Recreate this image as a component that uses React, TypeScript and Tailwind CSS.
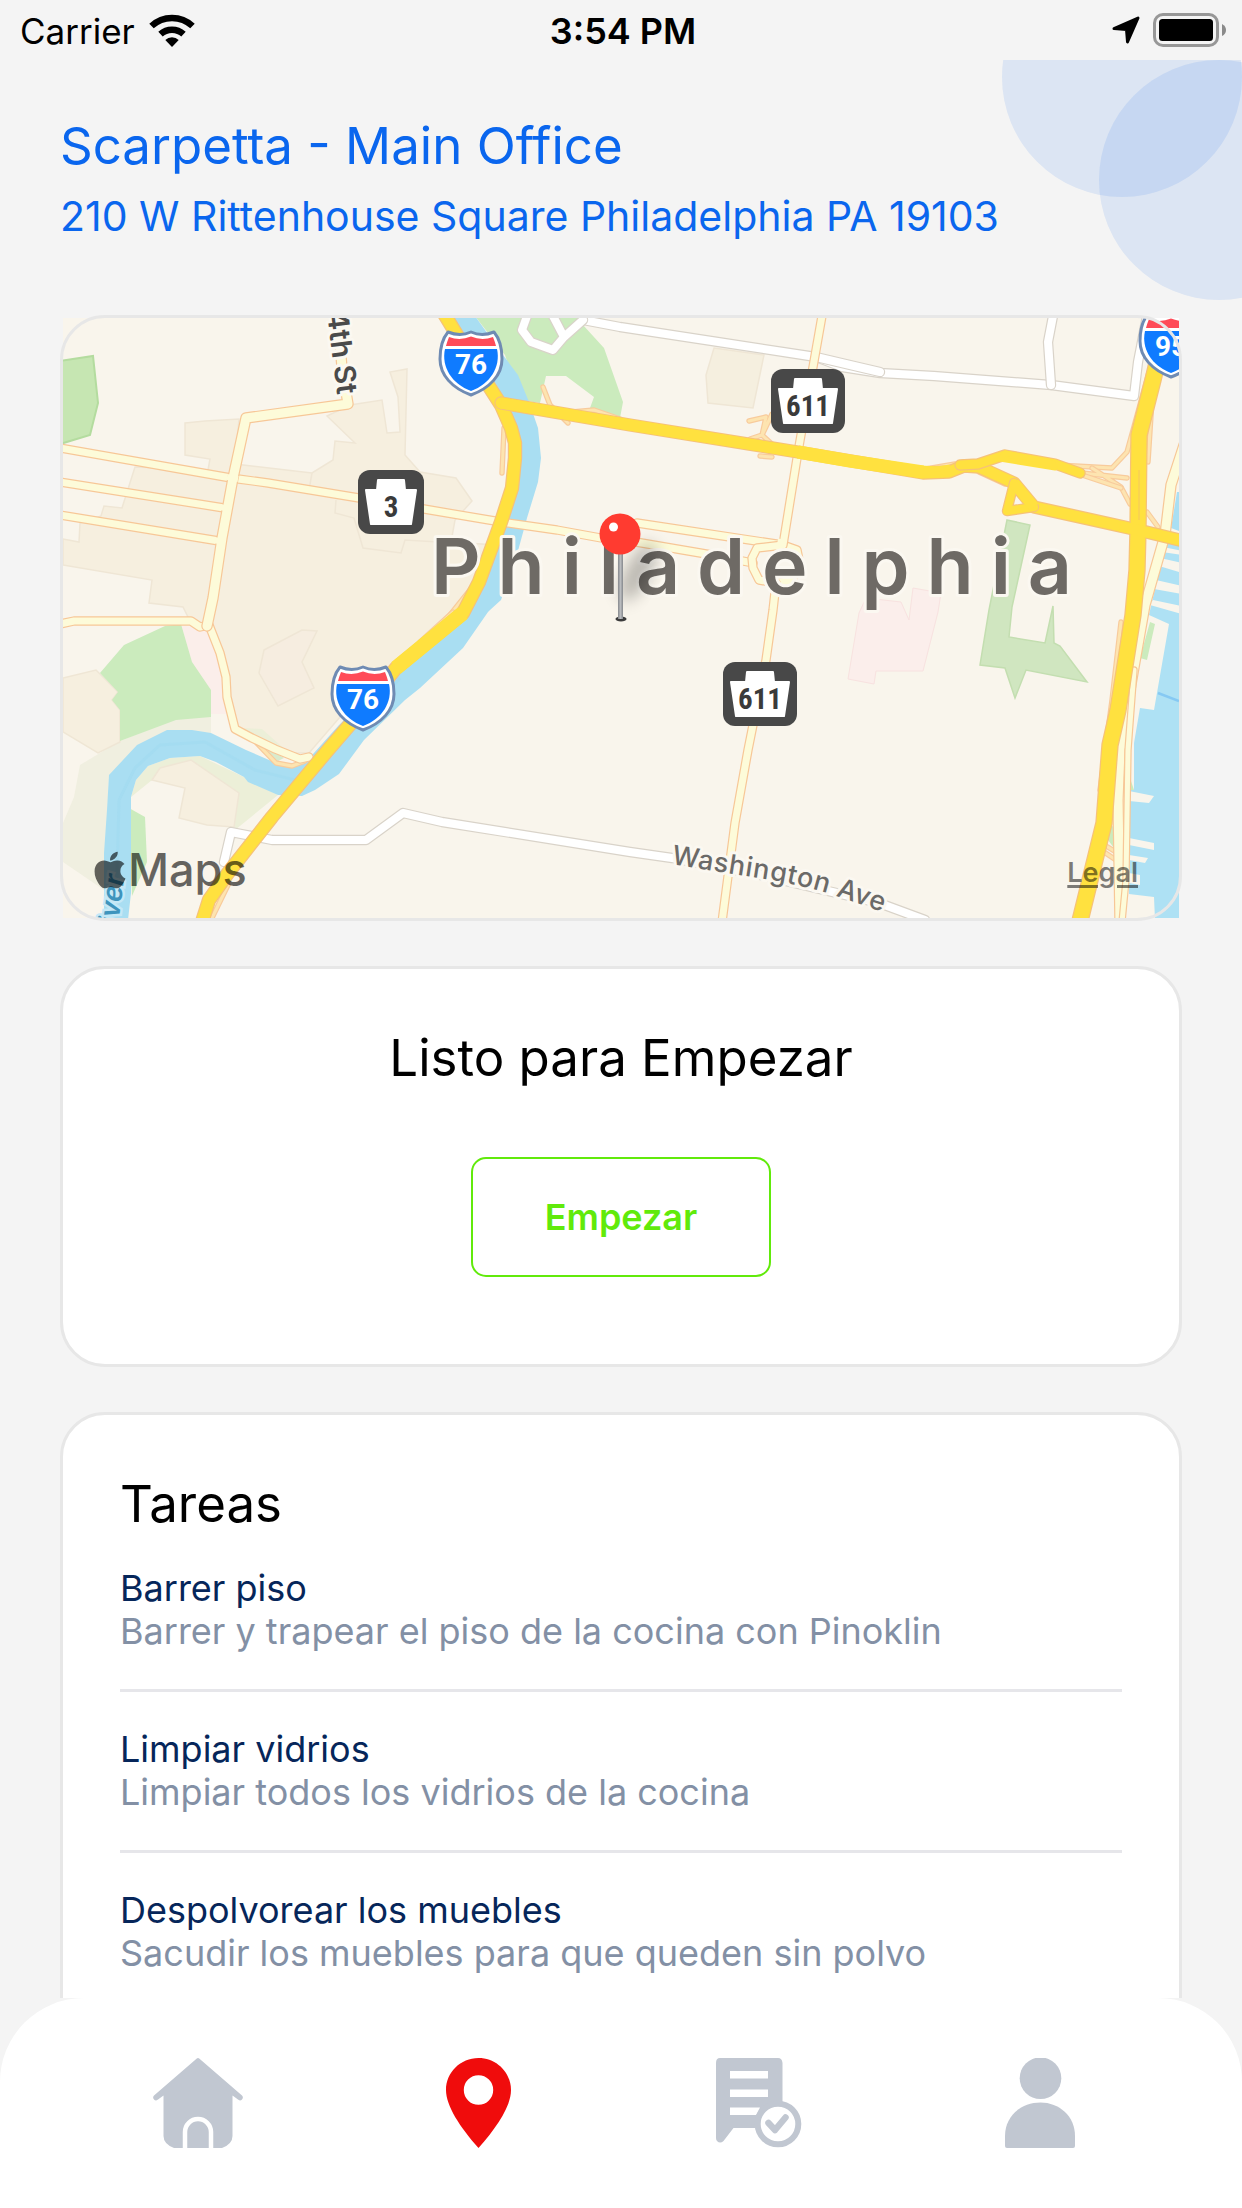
import { FaApple } from "react-icons/fa";

const tasks = [
  { title: "Barrer piso", detail: "Barrer y trapear el piso de la cocina con Pinoklin" },
  { title: "Limpiar vidrios", detail: "Limpiar todos los vidrios de la cocina" },
  { title: "Despolvorear los muebles", detail: "Sacudir los muebles para que queden sin polvo" },
];

function StatusBar() {
  return (
    <div className="relative z-10 grid h-[60px] shrink-0 grid-cols-3 items-center pl-[20px] pr-[16px] text-black">
      <div className="flex items-center gap-[14px]">
        <span className="pt-[2px] text-[35px] leading-[42px]">Carrier</span>
        <svg className="h-[33px] w-[46px]" viewBox="0 0 46 33" aria-label="Wi-Fi">
          <path d="M23 33 L16.3 26 A9.8 9.8 0 0 1 29.700 26 Z" />
          <path d="M11.500 20.200 A17 17 0 0 1 34.500 20.200" fill="none" stroke="#000" strokeWidth="6.500" />
          <path d="M2.500 12 A30 30 0 0 1 43.500 12" fill="none" stroke="#000" strokeWidth="6.500" />
        </svg>
      </div>
      <span className="pt-[2px] text-center text-[36px] font-semibold leading-[42px]">3:54 PM</span>
      <div className="flex items-center justify-end gap-[13px]">
        <svg className="h-[28px] w-[28px]" viewBox="0 0 28 28" aria-label="Ubicación">
          <path
            d="M26 2 L15.500 26 L14.500 13.500 L2 12.500 Z"
            fill="#000"
            stroke="#000"
            strokeWidth="3"
            strokeLinejoin="round"
          />
        </svg>
        <svg className="h-[34px] w-[73px]" viewBox="0 0 73 34" aria-label="Batería">
          <rect x="1.500" y="1.500" width="63" height="31" rx="8.500" fill="none" stroke="#979797" strokeWidth="3" />
          <rect x="6" y="6" width="54" height="22" rx="3.500" />
          <path d="M69 11 Q73 13 73 17 Q73 21 69 23 Z" fill="#8a8a8a" />
        </svg>
      </div>
    </div>
  );
}

function Road({ d, w, fill, edge }: { d: string; w: number; fill: string; edge: string }) {
  return (
    <g fill="none" strokeLinejoin="round" strokeLinecap="round">
      <path d={d} stroke={edge} strokeWidth={w + 2.4} />
      <path d={d} stroke={fill} strokeWidth={w} />
    </g>
  );
}

function Interstate({ x, y, label }: { x: number; y: number; label: string }) {
  return (
    <g transform={`translate(${x} ${y})`}>
      <path
        d="M-23 -31 Q-11 -26 0 -31 Q11 -26 23 -31 C28 -25 31 -15 31 -4 C31 12 19 25 0 32 C-19 25 -31 12 -31 -4 C-31 -15 -28 -25 -23 -31 Z"
        fill="#fff"
        stroke="#6f8bb3"
        strokeWidth="3"
        strokeLinejoin="round"
      />
      <path d="M-22 -26 Q-11 -22 0 -26.500 Q11 -22 22 -26 Q24 -21 25 -17 H-25 Q-24 -21 -22 -26 Z" fill="#ff4b58" />
      <path d="M-26 -14 H26 C30 4 19 21 0 28 C-19 21 -30 4 -26 -14 Z" fill="#0f7bff" />
      <text x="0" y="11" textAnchor="middle" fontSize="28" fontWeight="700" fill="#fff" className="font-['Roboto',sans-serif]">
        {label}
      </text>
    </g>
  );
}

function Keystone({ x, y, w, label }: { x: number; y: number; w: number; label: string }) {
  const c = w / 2;
  return (
    <g transform={`translate(${x} ${y})`}>
      <rect width={w} height="64" rx="12" fill="#484848" />
      <path
        d={`M${c - 13} 10 H${c + 13} L${c + 14} 20 H${w - 8} L${w - 13} 54 H13 L8 20 H${c - 14} Z`}
        fill="#fff"
        stroke="#fff"
        strokeWidth="2"
        strokeLinejoin="round"
      />
      <text x={c} y="47" textAnchor="middle" fontSize="29" fontWeight="700" fill="#3a3a3a" className="font-['Roboto_Condensed','Roboto',sans-serif]">
        {label}
      </text>
    </g>
  );
}

const YELLOW = "#ffe13f";
const YELLOW_EDGE = "#f6c278";
const PALE = "#fdfbd9";
const PALE_EDGE = "#f7c797";
const RAMP = "#fde4b0";
const RAMP_EDGE = "#f8cb9c";
const WHITE_EDGE = "#d9d3c9";

const ramps = [
  "M543 387 L550 405 L568 423",
  "M572 412 L594 410 L620 419",
  "M504 428 L502 473",
  "M474 585 L442 625",
  "M453 612 L420 642",
  "M749 421 L766 417 L762 435 L750 439 M772 414 L762 435 L773 445 M760 456 L772 457",
  "M1057 465 L1112 468 L1127 452 L1149 372",
  "M1082 473 L1127 478 M1092 468 L1121 487 L1130 504",
  "M1082 475 L1121 488",
  "M1147 512 L1158 527",
  "M979 472 L1005 484 M920 470 L955 464",
  "M1152 400 L1148 462",
  "M1121 622 L1112 700 L1100 790",
  "M252 738 L276 763 L292 766 L305 761",
  "M1106 846 L1116 852 M1104 852 L1116 860",
  "M212 918 L228 885",
];

const paleRoads = [
  "M60 448 L231 478 L268 483 L359 498 L424 509 L501 522 L557 530 L601 538",
  "M637 523 L783 545",
  "M630 541 L712 555 L753 563",
  "M60 482 L224 508",
  "M60 515 L219 541",
  "M783 545 L757 548 L752 558 L753 568 L759 580 L776 583 L792 580 L800 565 L797 550 L783 545",
  "M822 316 L798 452 L783 545",
  "M776 583 L773 610 L766 660 L748 750 L735 823 L722 922",
  "M60 624 L74 621 L191 621 L200 627 L209 625 L220 653 L226 677 L227 697 L235 729 L252 738 L275 749 L300 759 L309 757",
];

const whiteRoads = [
  "M583 320 L620 327 L816 357 L842 367 L880 373 L934 376 L1051 385 L1134 396 L1138 362 L1147 316",
  "M816 357 L850 365 L880 372",
  "M1053 316 L1048 342 L1051 385",
  "M527 316 L522 330 L531 342 L553 350 L564 337 L583 320 M553 316 L564 337",
  "M224 862 L231 832 L272 840 L366 840 L403 813 L442 822 L630 852 L672 858 L760 875 L879 903 L925 920",
];

function MapDrawing() {
  return (
    <svg className="block h-auto w-full" viewBox="63 318 1116 600" role="img" aria-label="Mapa de Philadelphia">
      <defs>
        <filter id="soft" x="-50%" y="-50%" width="200%" height="200%">
          <feGaussianBlur stdDeviation="8" />
        </filter>
        <linearGradient id="needle" x1="0" x2="1">
          <stop offset="0" stopColor="#85888c" />
          <stop offset="0.5" stopColor="#b9bbbe" />
          <stop offset="1" stopColor="#85888c" />
        </linearGradient>
        <path id="washington" d="M671 864 L720 872 L765 879 Q800 885 827 893 L895 916" />
      </defs>
      <rect x="63" y="318" width="1116" height="600" fill="#f9f5ec" />

      <g stroke="#efe6d5" strokeWidth="1.500">
        <path
          fill="#f6efdf"
          d="M185 423 L205 421 L239 419 L235 464 L312 473 L333 460 L335 441 L355 443 L327 416 L350 405 L382 400 L387 433 L400 432 L398 397 L390 372 L407 369 L405 455 L420 472 L456 478 L472 501 L455 520 L451 542 L496 545 L473 585 L453 612 L394 667 L340 717 L309 753 L287 753 L235 730 L228 697 L224 663 L209 627 L190 621 L183 607 L149 603 L152 580 L63 565 V539 L79 542 L80 523 L101 516 L104 506 L122 508 L135 467 L208 470 L210 459 L185 455 Z"
        />
        <path fill="none" d="M336 500 L335 513 L354 518 L363 548 L401 553 L405 540 L455 543 M312 473 L309 490" />
        <path fill="#f6ede0" d="M264 650 L302 630 L317 631 L302 662 L314 688 L278 706 L259 673 Z" />
        <path fill="#f5efdf" d="M714 348 L764 355 L753 408 L708 403 L706 375 Z" />
      </g>
      <path fill="#f0efe0" d="M80 765 L120 741 L176 719 L211 716 V735 L192 732 H167 L137 747 L109 777 L104 890 L63 862 V823 L74 797 Z" />
      <path fill="#f6efdf" stroke="#efe6d5" strokeWidth="1.500" d="M63 678 L96 670 L118 692 L112 700 L120 710 V742 L98 753 L63 732 Z" />
      <path fill="#fbeeea" d="M182 626 L205 627 L222 663 L226 714 H211 L190 660 Z" />
      <path fill="#cbebbd" d="M124 645 L165 626 L181 624 L192 662 L211 690 V717 L176 720 L120 741 V710 L112 700 L118 692 L100 673 Z" />
      <path fill="#ecefd8" d="M131 797 L136 780 L148 766 L170 758 L200 756 L244 777 L278 795 L235 830 L185 810 Z" />
      <path fill="#f9f5ec" d="M131 797 L152 780 L185 788 L179 818 L207 826 L235 829 L220 850 H131 Z" />
      <path fill="#f6efdf" stroke="#efe6d5" strokeWidth="1.500" d="M152 780 L160 768 L191 760 L239 793 L234 827 L207 825 L179 818 L185 788 Z" />
      <path fill="#ecefd8" d="M244 728 L262 729 L288 752 L262 742 Z" />
      <path fill="#c6e6b2" stroke="#b4dc9f" strokeWidth="2" d="M60 361 L93 356 L98 403 L90 435 L60 444 Z" />
      <path fill="#cbebbd" d="M475 316 H575 L583 325 L604 348 L623 402 L620 418 L590 408 L594 397 L566 376 H546 L540 403 L520 400 L505 355 Z" />
      <path fill="#cbebbd" d="M129 808 L145 817 L147 862 L132 896 Z" />

      <path
        fill="#a9def2"
        d="M453 316 L485 388 L509 415 L518 450 V488 L505 522 L475 582 L460 618 L398 667 L339 725 L305 763 L276 763 L246 750 L211 733 L192 730 H167 L137 745 L109 775 L107 810 L104 853 V920 H128 L131 893 V797 L136 780 L148 766 L170 758 L200 756 L216 762 L244 777 L248 782 L278 795 L302 796 L315 790 L339 774 L364 740 L405 700 L420 688 L463 648 L488 612 L490 610 L501 600 L516 558 L527 518 L538 482 L541 458 L538 428 L529 402 L518 375 L503 355 L475 316 Z"
      />
      <path
        fill="none"
        stroke="#a1daf0"
        strokeWidth="3"
        opacity="0.6"
        d="M116 916 L119 800 L135 768 L160 745 L205 742 L255 770 L295 780 L330 755 L400 678"
      />
      <path fill="#d9ebcd" d="M262 752 L272 750 L284 758 L276 762 Z" />

      <g fill="#fbeeeb" stroke="#f8e2e0" strokeWidth="1">
        <path d="M866 598 L901 602 L909 620 L913 588 L941 593 L938 612 L923 671 H876 L874 684 L848 679 L859 613 Z" />
      </g>
      <path
        fill="#d0e6c0"
        stroke="#c3deb0"
        strokeWidth="1.500"
        d="M1007 520 L1030 525 L1012 607 L1009 637 L1045 643 L1053 606 L1054 643 L1060 646 L1087 682 L1026 670 L1015 698 L1005 668 L980 665 L989 610 Z"
      />

      <path fill="#a9dff3" d="M1177 492 L1171 528 L1182 532 V492 Z" />
      <path
        fill="#aee1f4"
        d="M1165 543 L1182 546 V920 H1155 L1154 897 L1129 894 L1130 790 H1134 V743 L1140 708 L1154 710 L1169 624 L1149 615 L1157 580 Z"
      />
      <g fill="#f9f5ec">
        <path d="M1160 558 L1182 563 V573 L1159 566 Z" />
        <path d="M1156 580 L1182 586 V594 L1154 589 Z" />
        <path d="M1153 600 L1182 606 V614 L1150 605 Z" />
        <path d="M1163 547 L1182 551 V555 L1162 552 Z" />
        <path d="M1129 791 L1154 796 L1149 803 L1129 801 Z" />
        <path d="M1129 838 L1154 843 V850 L1129 845 Z" />
        <path d="M1129 855 L1148 858 L1145 863 L1129 860 Z" />
        <path d="M1129 873 L1140 875 V885 L1129 883 Z" />
      </g>
      <path d="M1158 693 L1179 701" stroke="#86c9f3" strokeWidth="2.500" />
      <path fill="#cbebbd" d="M1150 622 L1155 624 L1147 660 L1140 658 Z M1130 778 L1134 790 H1130 Z M1108 830 L1114 825 L1114 848 L1108 840 Z" />

      {whiteRoads.map((d) => (
        <Road key={d} d={d} w={8} fill="#fff" edge={WHITE_EDGE} />
      ))}
      {ramps.map((d) => (
        <Road key={d} d={d} w={3} fill={RAMP} edge={RAMP_EDGE} />
      ))}
      {paleRoads.map((d) => (
        <Road key={d} d={d} w={7} fill={PALE} edge={PALE_EDGE} />
      ))}
      <Road d="M338 318 L342 368 L348 404 L246 418 L233 478 L222 538 L213 598 L207 626" w={9} fill={PALE} edge={PALE_EDGE} />
      <Road d="M1184 445 L1171 485 L1165 535 L1145 605 L1130 690 L1120 750 L1118 800 L1120 922" w={9} fill={PALE} edge={PALE_EDGE} />
      <Road d="M1134 670 L1128 750 L1126 880 L1122 922" w={5} fill={PALE} edge={PALE_EDGE} />
      <path d="M781 539 L779 552" stroke={PALE} strokeWidth="6" />
      <path d="M227 477 L238 479 M220 507 L230 509 M214 540 L224 542" stroke={PALE} strokeWidth="6" />

      <Road d="M443 312 L457 335 L490 388 L501 405 L511 428 L515 443 V458 L512 488 L501 522 L490 552 L479 582 L463 613 L396 668 L365 707 L328 750 L272 817 L228 873 L209 900 L202 922" w={12} fill={YELLOW} edge={YELLOW_EDGE} />
      <path d="M463 613 L396 668" stroke={YELLOW} strokeWidth="15" />
      <Road d="M501 403 L630 425 L798 452 L923 473 L949 472 L964 466 L979 467 L1014 483 L1034 507 L1138 530 L1184 541" w={11} fill={YELLOW} edge={YELLOW_EDGE} />
      <Road d="M1014 483 L1007 511 L1034 507" w={8} fill={YELLOW} edge={YELLOW_EDGE} />
      <Road d="M960 465 L978 464 L1005 455 L1055 464 L1080 473" w={9} fill={YELLOW} edge={YELLOW_EDGE} />
      <path d="M1005 453 L1053 463 L1055 468 L1000 459 Z M870 463 L925 471 L950 467" fill={YELLOW} stroke={YELLOW} strokeWidth="5" strokeLinejoin="round" />
      <path d="M798 452 L850 461 L923 472" fill="none" stroke={YELLOW} strokeWidth="13" />
      <Road d="M1160 350 L1153 380 L1139 435 L1138 530 L1137 570 L1133 615 L1118 710 L1110 745 L1104 823 L1079 925" w={15} fill={YELLOW} edge={YELLOW_EDGE} />
      <path d="M501 403 L630 425 L798 452 M1120 526 L1150 533 M1014 483 L1034 507" fill="none" stroke={YELLOW} strokeWidth="11" />
      <path d="M1139 470 V520" stroke="#f8cf55" strokeWidth="1.500" />

      <g fill="#4a4a4a" stroke="#fbf8f1" strokeWidth="6" strokeLinejoin="round" className="font-['Inter',sans-serif] [paint-order:stroke]">
        <text transform="translate(327 312) rotate(83)" fontSize="29" fontWeight="600">
          4th St
        </text>
        <text fontSize="27" fontWeight="500" fill="#6b6a68" className="tracking-wide">
          <textPath href="#washington">Washington Ave</textPath>
        </text>
        <text x="431" y="594" fontSize="77" fontWeight="600" fill="#6e6a65" className="tracking-[0.22em]">
          Philadelphia
        </text>
      </g>
      <text
        transform="translate(116 944) rotate(-83)"
        fontSize="28"
        fontWeight="600"
        fontStyle="italic"
        fill="#3e94bd"
        stroke="#c4e8f6"
        strokeWidth="5"
        className="font-['Inter',sans-serif] [paint-order:stroke]"
      >
        River
      </text>

      <Interstate x={471} y={363} label="76" />
      <Interstate x={363} y={698} label="76" />
      <Interstate x={1171} y={345} label="95" />
      <Keystone x={358} y={470} w={66} label="3" />
      <Keystone x={771} y={369} w={74} label="611" />
      <Keystone x={723} y={662} w={74} label="611" />

      <ellipse cx="638" cy="572" rx="12" ry="32" transform="rotate(28 638 572)" fill="#000" opacity="0.25" filter="url(#soft)" />
      <ellipse cx="621" cy="619" rx="5.500" ry="2.500" fill="#3b3b3b" />
      <rect x="618" y="550" width="5" height="69" fill="url(#needle)" />
      <circle cx="620" cy="534" r="20.500" fill="#ff3b30" />
      <circle cx="613.500" cy="527" r="4.500" fill="#fff" />
    </svg>
  );
}

function MapCard() {
  return (
    <section className="relative p-[3px]">
      <MapDrawing />
      <div className="pointer-events-none absolute inset-0 rounded-[45px] border-[3px] border-[#e7e7e7]" />
      <div className="absolute bottom-[24px] left-[34px] flex items-center text-black/60">
        <FaApple className="h-[42px] w-[32px]" />
        <span className="pl-[2px] text-[45px] font-medium leading-[54px]">Maps</span>
      </div>
      <a href="#legal" className="absolute bottom-[32px] right-[44px] text-[27px] font-semibold leading-[32px] text-black/50 underline decoration-[3px] underline-offset-[3px]">
        Legal
      </a>
    </section>
  );
}

function HouseIcon() {
  return (
    <svg className="h-[90px] w-[90px]" viewBox="0 0 90 90" fill="#c1c7d1" aria-hidden="true">
      <path d="M43.500 0.700 Q45 -0.600 46.500 0.700 L89 37.500 Q91 40 88.500 42 Q87 43 85 41.500 L79.500 37.500 V78 Q79.500 86 69 90 H21 Q10.500 86 10.500 78 V37.500 L5 41.500 Q3 43 1.500 42 Q-1 40 1 37.500 Z" />
      <path d="M32 90 V74 A13 13 0 0 1 58 74 V90" fill="none" stroke="#fff" strokeWidth="4.500" />
    </svg>
  );
}

function PinIcon() {
  return (
    <svg className="h-[90px] w-[65px]" viewBox="0 0 65 90" aria-hidden="true">
      <path
        fill="#f00c0c"
        fillRule="evenodd"
        d="M32.500 0 C14.500 0 0 14.500 0 32 C0 48 14 69 32.500 90 C51 69 65 48 65 32 C65 14.500 50.500 0 32.500 0 Z M32.500 17.300 A14.700 14.700 0 1 1 32.500 46.700 A14.700 14.700 0 1 1 32.500 17.300 Z"
      />
    </svg>
  );
}

function ReportIcon() {
  return (
    <svg className="h-[90px] w-[86px]" viewBox="0 0 86 90" aria-hidden="true">
      <path fill="#c1c7d1" d="M4 0 H62 Q66 0 66.500 5 V70 H17.500 L7.500 83 Q4 86 1 83 Q0 82 0 80 V5 Q0 0 4 0 Z" />
      <path fill="#fff" d="M14 13 H52 V20.500 H14 Z M14 31.500 H52 V39 H14 Z M14 49.500 H44 L40 57 H14 Z" />
      <circle cx="62" cy="66" r="20.300" fill="#fff" stroke="#c1c7d1" strokeWidth="6" />
      <path d="M52.500 65 L59 72 L69.500 59.500" fill="none" stroke="#c1c7d1" strokeWidth="6.500" strokeLinecap="round" strokeLinejoin="round" />
    </svg>
  );
}

function PersonIcon() {
  return (
    <svg className="h-[90px] w-[70px]" viewBox="0 0 70 90" fill="#c1c7d1" aria-hidden="true">
      <circle cx="35.500" cy="20.200" r="20.800" />
      <path d="M0 88 V78 C0 58 16 44.500 35.500 44.500 C54 44.500 70 58 70 78 V88 Q70 90 68 90 H2 Q0 90 0 88 Z" />
    </svg>
  );
}

export default function App() {
  return (
    <div className="flex h-screen flex-col overflow-hidden bg-[#f4f4f4] font-['Inter',sans-serif]">
      <StatusBar />
      <main className="relative min-h-0 flex-1 overflow-y-auto overflow-x-hidden px-[60px] [scrollbar-width:none]">
        <div className="pointer-events-none absolute right-0 top-[-103px] size-[240px] rounded-full bg-[#0a64f0]/10" />
        <div className="pointer-events-none absolute right-[-97px] top-0 size-[240px] rounded-full bg-[#0a64f0]/10" />

        <header className="relative pb-[74px] pt-[54px] text-[#0a66ee]">
          <h1 className="text-[51px] leading-[64px]">Scarpetta - Main Office</h1>
          <p className="pt-[13px] text-[41px] leading-[50px]">210 W Rittenhouse Square Philadelphia PA 19103</p>
        </header>

        <div className="flex flex-col gap-[45px]">
          <MapCard />

          <section className="flex flex-col items-center rounded-[45px] border-[3px] border-[#e7e7e7] bg-white pb-[87px] pt-[57px]">
            <h2 className="text-[51px] leading-[64px] text-black">Listo para Empezar</h2>
            <button
              type="button"
              className="mt-[67px] h-[120px] w-[300px] rounded-[15px] border-2 border-[#61ea0b] text-[36px] font-semibold text-[#61ea0b]"
            >
              Empezar
            </button>
          </section>

          <section className="rounded-[45px] border-[3px] border-[#e7e7e7] bg-white px-[57px] pb-[57px] pt-[62px]">
            <h2 className="text-[51px] leading-[54px] text-black">Tareas</h2>
            <ul className="divide-y-[3px] divide-[#e6e6ea]">
              {tasks.map((task) => (
                <li key={task.title} className="pb-[36px] pt-[36px] text-[36px] leading-[43px]">
                  <h3 className="text-[#06265a]">{task.title}</h3>
                  <p className="text-[#8390a5]">{task.detail}</p>
                </li>
              ))}
            </ul>
          </section>
        </div>
      </main>

      <nav className="shrink-0 bg-[#f4f4f4]">
        <div className="grid h-[210px] grid-cols-4 rounded-t-[84px] bg-white pb-[60px] pl-[58px] pr-[62px] pt-[60px]">
          <button type="button" aria-label="Inicio" className="flex justify-center">
            <HouseIcon />
          </button>
          <button type="button" aria-label="Ubicación" aria-current="page" className="flex justify-center">
            <PinIcon />
          </button>
          <button type="button" aria-label="Reportes" className="flex justify-center">
            <ReportIcon />
          </button>
          <button type="button" aria-label="Perfil" className="flex justify-center">
            <PersonIcon />
          </button>
        </div>
      </nav>
    </div>
  );
}
